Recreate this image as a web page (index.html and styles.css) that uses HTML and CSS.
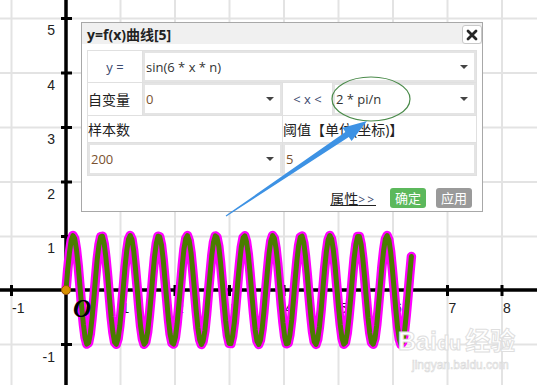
FILE: index.html
```html
<!DOCTYPE html>
<html>
<head>
    <title>y=f(x) 曲线</title>
    <meta charset="UTF-8">
    <link rel="stylesheet" href="styles.css">
</head>
<body>
    <div class="stage">
        <svg class="plot" width="537" height="385" viewBox="0 0 537 385">
            <g class="grid">
                <line x1="11.5" y1="0" x2="11.5" y2="385"/>
                <line x1="120.5" y1="0" x2="120.5" y2="385"/>
                <line x1="175" y1="0" x2="175" y2="385"/>
                <line x1="229.5" y1="0" x2="229.5" y2="385"/>
                <line x1="284" y1="0" x2="284" y2="385"/>
                <line x1="338.5" y1="0" x2="338.5" y2="385"/>
                <line x1="393" y1="0" x2="393" y2="385"/>
                <line x1="447.5" y1="0" x2="447.5" y2="385"/>
                <line x1="502" y1="0" x2="502" y2="385"/>
                <line x1="0" y1="18.5" x2="537" y2="18.5"/>
                <line x1="0" y1="73" x2="537" y2="73"/>
                <line x1="0" y1="127.5" x2="537" y2="127.5"/>
                <line x1="0" y1="182" x2="537" y2="182"/>
                <line x1="0" y1="236.5" x2="537" y2="236.5"/>
                <line x1="0" y1="344.5" x2="537" y2="344.5"/>
            </g>
            <g class="labels">
                <text x="55" y="35" text-anchor="end">5</text>
                <text x="55" y="89.5" text-anchor="end">4</text>
                <text x="55" y="144" text-anchor="end">3</text>
                <text x="55" y="198.5" text-anchor="end">2</text>
                <text x="55" y="253" text-anchor="end">1</text>
                <text x="55" y="362" text-anchor="end">-1</text>
                <text x="12" y="313">-1</text>
                <text x="121.5" y="313">1</text>
                <text x="176" y="313">2</text>
                <text x="230.5" y="313">3</text>
                <text x="285" y="313">4</text>
                <text x="339.5" y="313">5</text>
                <text x="394" y="313">6</text>
                <text x="448.5" y="313">7</text>
                <text x="503" y="313">8</text>
            </g>
            <g class="axes">
                <line x1="66" y1="0" x2="66" y2="385"/>
                <line x1="0" y1="290" x2="537" y2="290"/>
            </g>
            <g class="ticks">
                <line x1="11.5" y1="285" x2="11.5" y2="296"/>
                <line x1="120.5" y1="285" x2="120.5" y2="296"/>
                <line x1="175" y1="285" x2="175" y2="296"/>
                <line x1="229.5" y1="285" x2="229.5" y2="296"/>
                <line x1="284" y1="285" x2="284" y2="296"/>
                <line x1="338.5" y1="285" x2="338.5" y2="296"/>
                <line x1="393" y1="285" x2="393" y2="296"/>
                <line x1="447.5" y1="285" x2="447.5" y2="296"/>
                <line x1="502" y1="285" x2="502" y2="296"/>
                <line x1="61" y1="18.5" x2="72" y2="18.5"/>
                <line x1="61" y1="73" x2="72" y2="73"/>
                <line x1="61" y1="127.5" x2="72" y2="127.5"/>
                <line x1="61" y1="182" x2="72" y2="182"/>
                <line x1="61" y1="236.5" x2="72" y2="236.5"/>
                <line x1="61" y1="344.5" x2="72" y2="344.5"/>
            </g>
            <polyline class="curve curve-outline" points=""/>
            <polyline class="curve curve-line" points=""/>
            <circle class="origin-dot" cx="66" cy="290" r="4.5"/>
            <text class="origin-label" x="73" y="317">O</text>
        </svg>

        <div class="dialog">
            <div class="dlg-title">
                <span>y=f(x)曲线[5]</span>
                <button class="close-btn">
                    <svg width="12" height="12" viewBox="0 0 12 12"><path d="M2 2 L10 10 M10 2 L2 10"/></svg>
                </button>
            </div>
            <div class="dlg-body">
                <div class="form">
                    <div class="cell label center">y =</div>
                    <div class="cell span3">
                        <div class="field"><span>sin(6 * x * n)</span><i class="caret"></i></div>
                    </div>
                    <div class="cell label">自变量</div>
                    <div class="cell">
                        <div class="field num"><span>0</span><i class="caret"></i></div>
                    </div>
                    <div class="cell label center">&lt; x &lt;</div>
                    <div class="cell">
                        <div class="field"><span>2 * pi/n</span><i class="caret"></i></div>
                    </div>
                    <div class="cell label span2">样本数</div>
                    <div class="cell label span2">阈值【单位(坐标)】</div>
                    <div class="cell span2">
                        <div class="field num"><span>200</span><i class="caret"></i></div>
                    </div>
                    <div class="cell span2">
                        <div class="field num"><span>5</span></div>
                    </div>
                </div>
                <div class="actions">
                    <a class="more-link">属性<span>&gt;&gt;</span></a>
                    <button class="btn btn-ok">确定</button>
                    <button class="btn btn-apply">应用</button>
                </div>
            </div>
        </div>

        <svg class="annot" width="537" height="385" viewBox="0 0 537 385">
            <ellipse cx="371" cy="99" rx="39" ry="22" class="mark-ring"/>
            <polygon class="mark-arrow" points="226.3,216.4 348.8,136.9 351.6,141 367,121 342.6,127.8 345.4,131.9 225.7,215.6"/>
        </svg>

        <div class="watermark">
            <div class="wm-logo">Bai<span class="wm-paw">du</span>经验</div>
            <div class="wm-url">jingyan.baidu.com</div>
        </div>
    </div>

    <script src="plot.js"></script>
</body>
</html>
```

FILE: styles.css
```css
:root {
    --grid: #e3e3e3;
    --cell-line: #e0e0e0;
    --text-main: #333;
    --text-label: #3c4a6e;
    --text-num: #7a5230;
}

* {
    margin: 0;
    padding: 0;
    box-sizing: border-box;
}

body {
    background: #fff;
    width: 537px;
    height: 385px;
    overflow: hidden;
    font-family: 'Open Sans', 'Noto Sans CJK SC', sans-serif;
}

.stage {
    position: relative;
    width: 537px;
    height: 385px;
}

.plot {
    display: block;
}

.grid line {
    stroke: var(--grid);
    stroke-width: 2;
}

.labels text {
    font-family: 'Liberation Sans', sans-serif;
    font-size: 14px;
    fill: #222;
}

.axes line {
    stroke: #000;
    stroke-width: 3.5;
}

.ticks line {
    stroke: #000;
    stroke-width: 3;
}

.curve {
    fill: none;
    stroke-linejoin: round;
    stroke-linecap: round;
}

.curve-outline {
    stroke: #ff00ff;
    stroke-width: 9.5;
}

.curve-line {
    stroke: #4a7c00;
    stroke-width: 5;
}

.origin-dot {
    fill: #d99100;
    stroke: #8a5a00;
    stroke-width: 1;
}

.origin-label {
    font-family: 'Liberation Serif', serif;
    font-style: italic;
    font-weight: bold;
    font-size: 25px;
    fill: #000;
}

/* floating dialog */
.dialog {
    position: absolute;
    left: 81px;
    top: 22px;
    width: 402px;
    height: 190px;
    background: #fff;
    border: 1px solid #a8a8a8;
}

.dlg-title {
    height: 21px;
    background: #f0f0f0;
    display: flex;
    justify-content: space-between;
    align-items: center;
    padding-left: 5px;
    font-size: 14px;
    font-weight: bold;
    color: #222;
}

.close-btn {
    width: 20px;
    height: 19px;
    margin-top: 2px;
    border: 1px solid #c8c8c8;
    border-radius: 3px;
    background: #fff;
    display: flex;
    align-items: center;
    justify-content: center;
}

.close-btn path {
    stroke: #262626;
    stroke-width: 2.8;
    stroke-linecap: round;
}

.dlg-body {
    padding: 6px 5px 3px;
}

.form {
    display: grid;
    grid-template-columns: 54px 139px 49px 143px;
    grid-template-rows: 31px 32px 26px 32px;
    gap: 1px;
    background: var(--cell-line);
    border: 1px solid var(--cell-line);
}

.cell {
    background: #fff;
    display: flex;
    align-items: center;
    min-width: 0;
}

.span2 {
    grid-column: span 2;
}

.span3 {
    grid-column: span 3;
}

.label {
    font-size: 14px;
    color: #222;
    white-space: nowrap;
}

.label.center {
    justify-content: center;
    color: var(--text-label);
    font-size: 13px;
}

.field {
    width: 100%;
    height: 100%;
    border: 2px solid #e4e4e4;
    display: flex;
    align-items: center;
    justify-content: space-between;
    padding: 0 6px 0 1px;
    font-size: 13px;
    color: var(--text-main);
}

.field.num {
    color: var(--text-num);
}

.caret {
    width: 0;
    height: 0;
    border-left: 4px solid transparent;
    border-right: 4px solid transparent;
    border-top: 4px solid #444;
}

.actions {
    display: flex;
    justify-content: flex-end;
    align-items: center;
    margin-top: 12px;
    padding-right: 5px;
}

.more-link {
    font-size: 14px;
    color: #222;
    text-decoration: underline;
    margin-right: 14px;
}

.more-link span {
    font-size: 12px;
    color: #3c4a6e;
    letter-spacing: 2px;
}

.btn {
    width: 36px;
    height: 20px;
    border: none;
    border-radius: 3px;
    color: #fff;
    font-family: 'Noto Sans CJK SC', sans-serif;
    font-size: 13px;
    line-height: 20px;
}

.btn-ok {
    background: #5cb85c;
    margin-right: 10px;
}

.btn-apply {
    background: #9a9a9a;
}

/* annotation overlay */
.annot {
    position: absolute;
    left: 0;
    top: 0;
}

.mark-ring {
    fill: none;
    stroke: #4b8b4b;
    stroke-width: 1.2;
}

.mark-arrow {
    fill: #3d92e4;
}

.watermark {
    position: absolute;
    left: 398px;
    top: 326px;
    color: #fff;
    -webkit-text-stroke: 1px #dedede;
    font-family: 'Liberation Sans', 'Noto Sans CJK SC', sans-serif;
}

.wm-logo {
    font-size: 25px;
    font-weight: bold;
    line-height: 30px;
    white-space: nowrap;
}

.wm-paw {
    font-size: 20px;
    margin-right: 4px;
}

.wm-url {
    font-size: 12px;
    margin-left: 14px;
    -webkit-text-stroke: 0.6px #d8d8d8;
}
```

FILE: plot.js
```js
// y = sin(6 * x * n), n = 2, sampled 200 times
const originX = 66
const originY = 290
const unit = 54.5

const points = []
for (let i = 0; i < 200; i++) {
  const x = i * 0.03185
  const px = originX + unit * x
  const py = originY - unit * Math.sin(12 * x)
  points.push(px.toFixed(1) + ',' + py.toFixed(1))
}

document.querySelectorAll('.curve').forEach((line) => {
  line.setAttribute('points', points.join(' '))
})
```
